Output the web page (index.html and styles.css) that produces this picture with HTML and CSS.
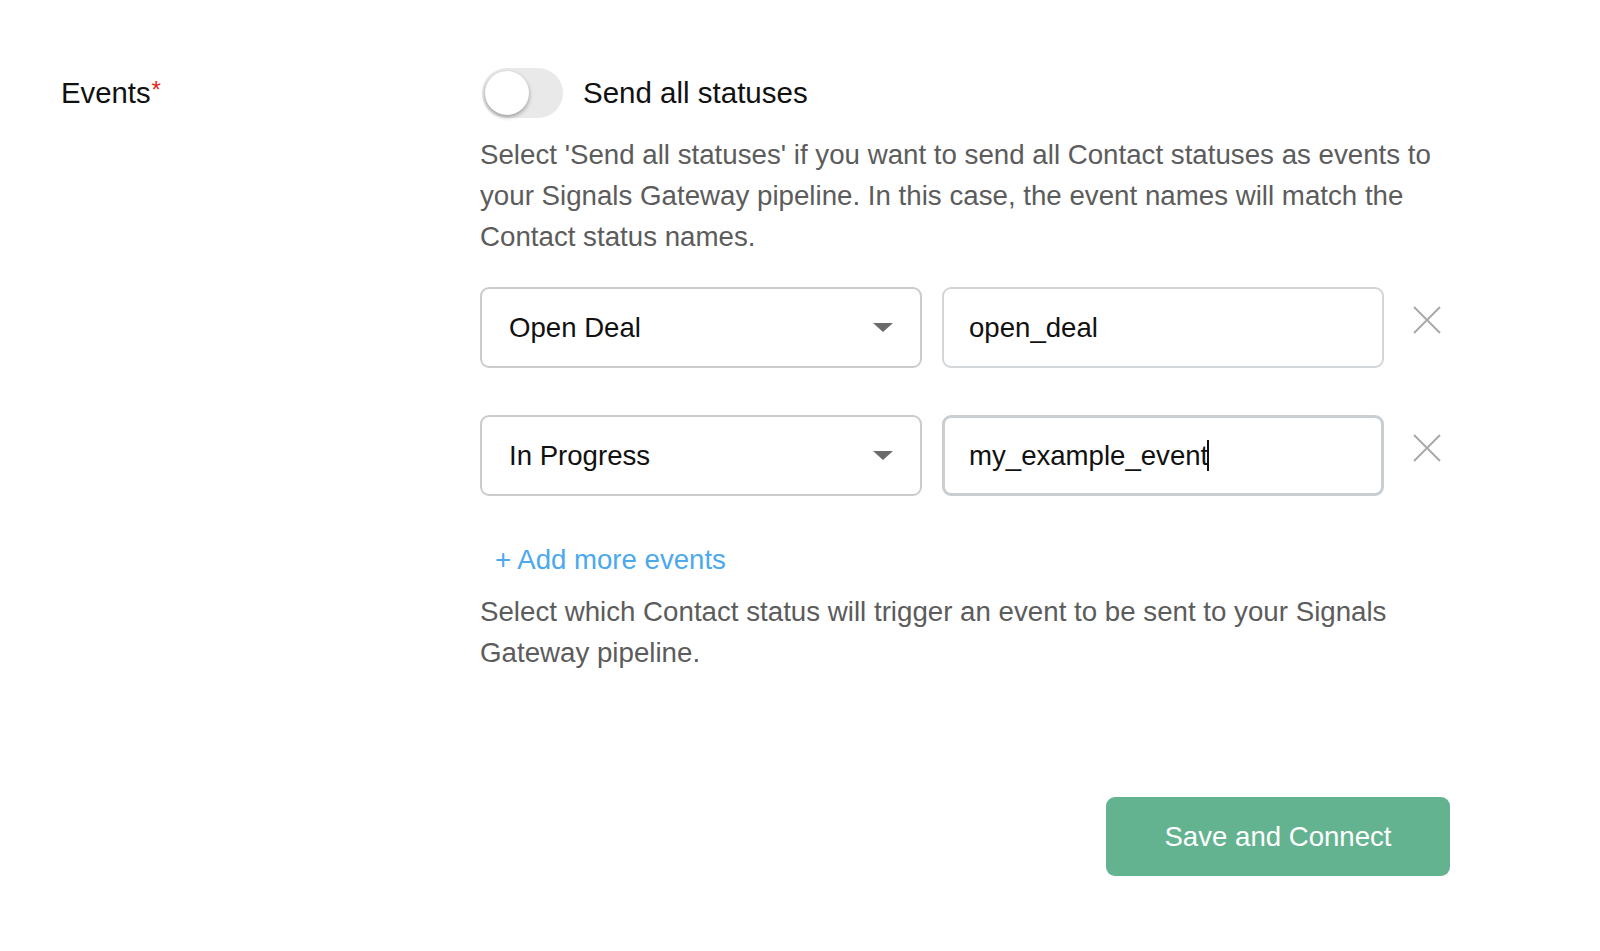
FILE: index.html
```html
<!DOCTYPE html>
<html lang="en">
<head>
<meta charset="utf-8">
<title>Events</title>
<link rel="stylesheet" href="styles.css">
</head>
<body>
<div class="form-row">
  <div class="label-col">
    <span class="label">Events</span><span class="req">*</span>
  </div>
  <div class="content-col">
    <div class="toggle-row">
      <div class="toggle"><div class="knob"></div></div>
      <span class="toggle-label">Send all statuses</span>
    </div>
    <p class="help first">Select 'Send all statuses' if you want to send all Contact statuses as events to your Signals Gateway pipeline. In this case, the event names will match the Contact status names.</p>

    <div class="event-rows">
      <div class="event-row">
        <div class="select"><span class="value">Open Deal</span><span class="arrow"></span></div>
        <div class="input"><span class="value">open_deal</span></div>
        <div class="remove"><svg width="28" height="28" viewBox="0 0 28 28"><path d="M1 1L27 27M27 1L1 27" stroke="#a9a9a9" stroke-width="2" fill="none"/></svg></div>
      </div>
      <div class="event-row">
        <div class="select"><span class="value">In Progress</span><span class="arrow"></span></div>
        <div class="input focused"><span class="value">my_example_event</span><span class="caret"></span></div>
        <div class="remove"><svg width="28" height="28" viewBox="0 0 28 28"><path d="M1 1L27 27M27 1L1 27" stroke="#a9a9a9" stroke-width="2" fill="none"/></svg></div>
      </div>
    </div>

    <a class="add-more">+ Add more events</a>
    <p class="help second">Select which Contact status will trigger an event to be sent to your Signals Gateway pipeline.</p>

    <div class="actions">
      <button class="primary">Save and Connect</button>
    </div>
  </div>
</div>
</body>
</html>
```

FILE: styles.css
```css
* { box-sizing: border-box; }

body {
  margin: 0;
  background: #ffffff;
  font-family: "Liberation Sans", Arial, Helvetica, sans-serif;
  color: #111;
}

.form-row {
  display: flex;
  padding: 68px 0 0 61px;
}

.label-col {
  width: 419px;
  flex: none;
  height: 50px;
  display: flex;
  align-items: center;
}

.label {
  font-size: 29.3px;
  color: #111;
}

.req {
  color: #e8231c;
  font-size: 24px;
  align-self: flex-start;
  margin-top: 8px;
  margin-left: 1px;
}

.content-col {
  width: 970px;
  flex: none;
}

.toggle-row {
  display: flex;
  align-items: center;
  height: 50px;
}

.toggle {
  width: 81px;
  height: 50px;
  border-radius: 25px;
  background: #e9e9e9;
  position: relative;
  margin-left: 2px;
}

.knob {
  position: absolute;
  left: 3px;
  top: 3px;
  width: 44px;
  height: 44px;
  border-radius: 50%;
  background: #fff;
  box-shadow: 0 2px 4px rgba(0,0,0,0.35);
}

.toggle-label {
  margin-left: 20px;
  font-size: 29.5px;
  color: #111;
}

.help {
  margin: 0;
  font-size: 27.7px;
  line-height: 41px;
  color: #5c5c5c;
}

.help.first {
  margin-top: 16px;
}

.event-rows {
  margin-top: 30px;
  display: flex;
  flex-direction: column;
  gap: 47px;
}

.event-row {
  display: flex;
  align-items: flex-start;
}

.select, .input {
  width: 442px;
  height: 81px;
  border: 2px solid #cccccc;
  border-radius: 9px;
  display: flex;
  align-items: center;
  padding-left: 27px;
  font-size: 27.6px;
  color: #111;
}

.select {
  padding-right: 27px;
  justify-content: space-between;
}

.arrow {
  width: 0;
  height: 0;
  border-left: 10px solid transparent;
  border-right: 10px solid transparent;
  border-top: 9px solid #6b6b6b;
}

.input {
  margin-left: 20px;
  border-color: #d3d6d9;
  padding-left: 25px;
}

.input.focused {
  border: 3px solid #c9ced3;
  padding-left: 24px;
}

.caret {
  display: inline-block;
  width: 2px;
  height: 31px;
  background: #111;
  margin-left: -1px;
}

.remove {
  margin-left: 29px;
  margin-top: 19px;
  width: 28px;
  height: 28px;
}

.remove svg { display: block; }

.add-more {
  display: block;
  margin-top: 43px;
  margin-left: 15px;
  font-size: 27.6px;
  line-height: 41px;
  color: #4ba9ec;
}

.help.second {
  margin-top: 11px;
}

.actions {
  display: flex;
  justify-content: flex-end;
  margin-top: 124px;
}

.primary {
  width: 344px;
  height: 79px;
  border: none;
  border-radius: 9px;
  background: #64b390;
  color: #fff;
  font-family: "Liberation Sans", Arial, Helvetica, sans-serif;
  font-size: 27.6px;
}
```
